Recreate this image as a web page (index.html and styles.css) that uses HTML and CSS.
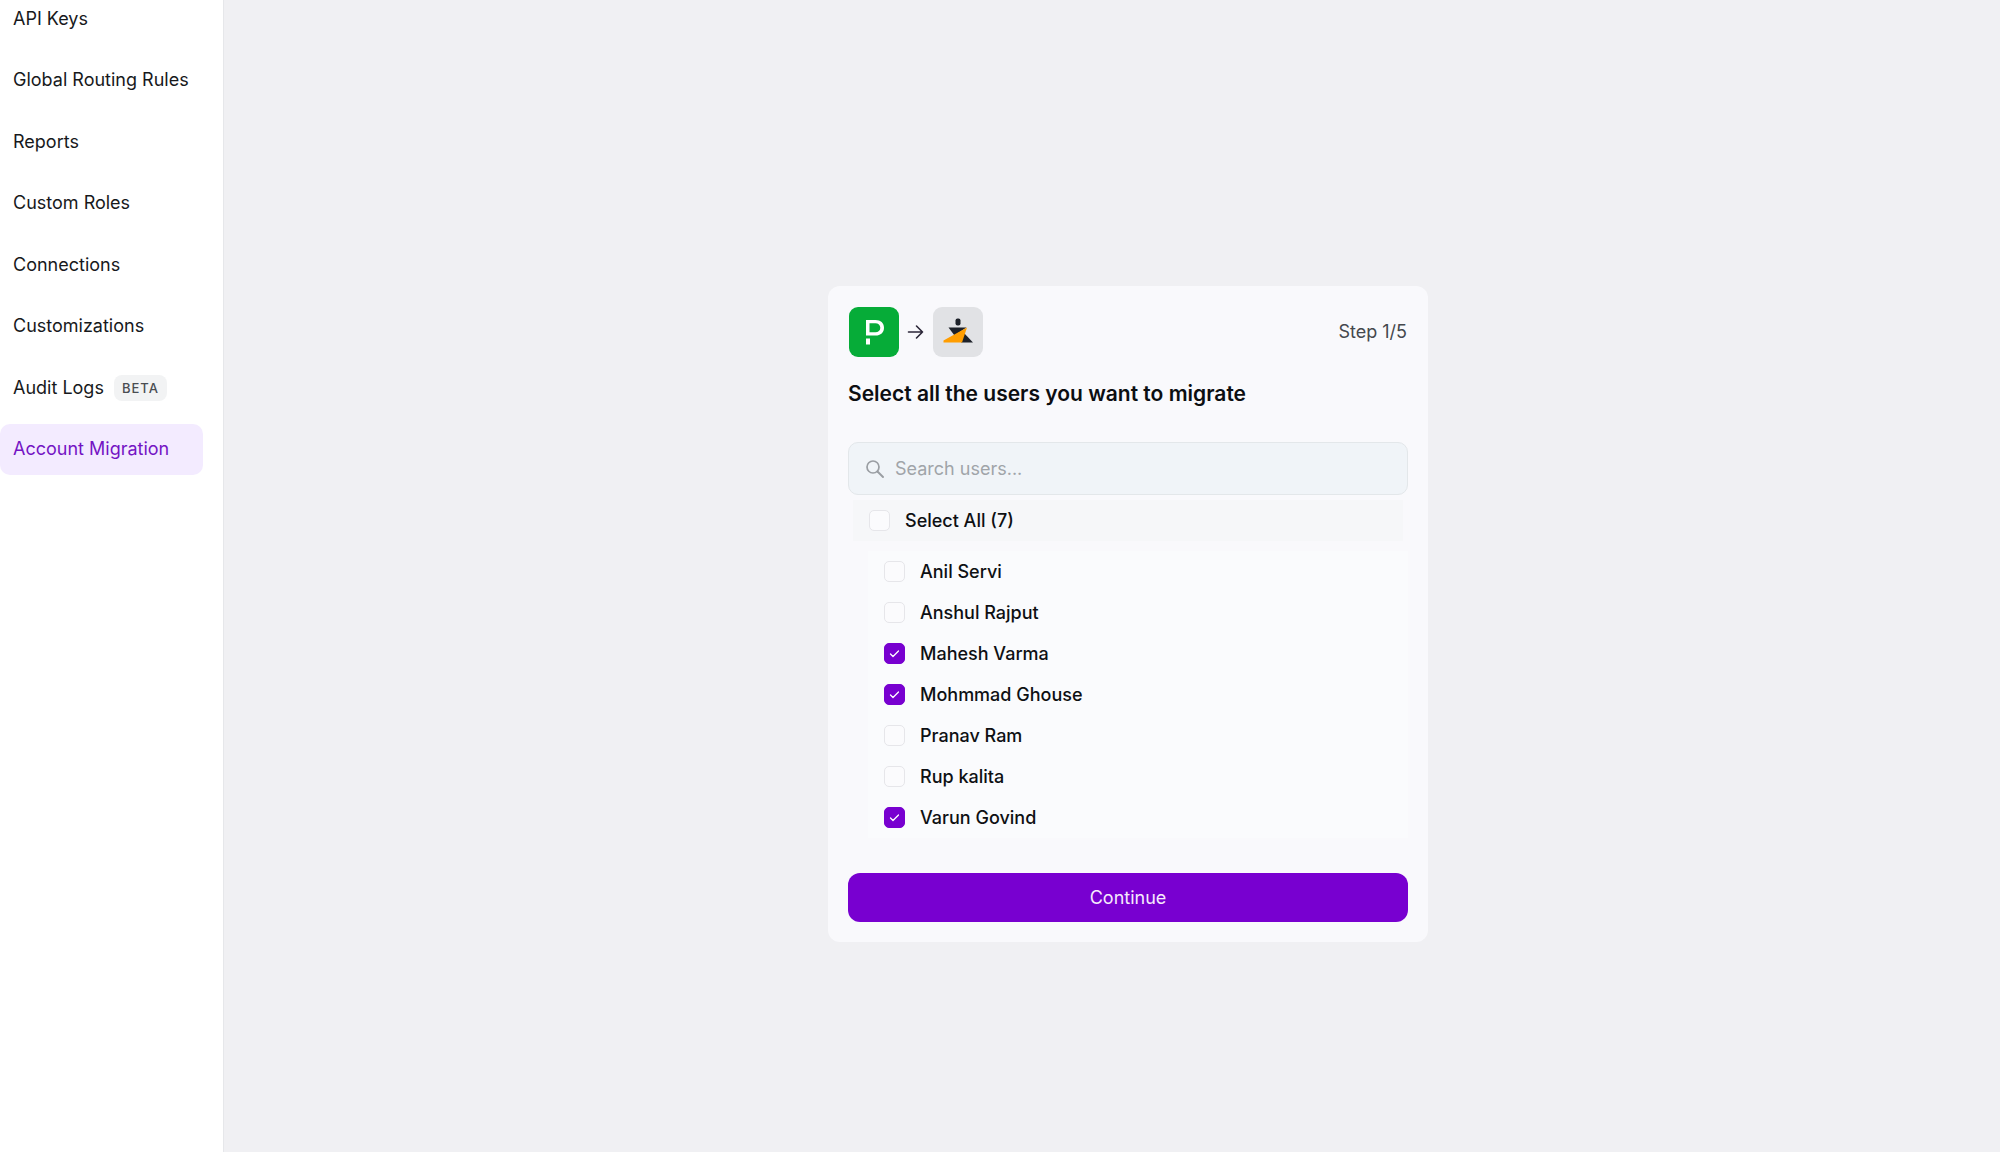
FILE: index.html
```html
<!DOCTYPE html>
<html lang="en">
<head>
<meta charset="utf-8">
<meta name="viewport" content="width=device-width, initial-scale=1">
<title>Account Migration</title>
<link rel="stylesheet" href="styles.css">
</head>
<body>
<div class="app">
  <aside class="sidebar">
    <nav aria-label="Settings">
      <ul class="nav-list">
        <li><a class="nav-link" href="#api-keys">API Keys</a></li>
        <li><a class="nav-link" href="#routing">Global Routing Rules</a></li>
        <li><a class="nav-link" href="#reports">Reports</a></li>
        <li><a class="nav-link" href="#roles">Custom Roles</a></li>
        <li><a class="nav-link" href="#connections">Connections</a></li>
        <li><a class="nav-link" href="#customizations">Customizations</a></li>
        <li><a class="nav-link" href="#audit">Audit Logs <span class="tag">BETA</span></a></li>
        <li><a class="nav-link active" href="#migration" aria-current="page">Account Migration</a></li>
      </ul>
    </nav>
  </aside>
  <main class="main">
    <form class="card">
      <header class="card-head">
        <div class="logos">
          <svg class="logo" viewBox="0 0 50 50" aria-hidden="true">
            <rect width="50" height="50" rx="9" fill="#06ac38"/>
            <path d="M17 31.500h4v6h-4z" fill="#fff"/>
            <path fill-rule="evenodd" d="M17 13h9.500c5.200 0 8.500 3 8.500 7.700s-3.300 7.800-8.500 7.800H17zM20.500 16.200v9.100h5.800c3 0 5-1.700 5-4.500s-2-4.600-5-4.600z" fill="#fff"/>
          </svg>
          <svg class="arrow" viewBox="0 0 18 16" aria-hidden="true">
            <path d="M1.500 8h14M9.500 2l6 6-6 6" fill="none" stroke="#2b2638" stroke-width="1.600" stroke-linecap="round" stroke-linejoin="round"/>
          </svg>
          <svg class="logo" viewBox="0 0 50 50" aria-hidden="true">
            <rect width="50" height="50" rx="9" fill="#e1e2e5"/>
            <rect x="22.500" y="11.500" width="5" height="7" rx="2" fill="#1d2129"/>
            <path d="M15.500 20.500h18l-12 8z" fill="#1d2129"/>
            <path d="M31 26l9 9.500H28z" fill="#1d2129"/>
            <path d="M34 20.500l-5 15H10.500v-2z" fill="#ff9d00"/>
          </svg>
        </div>
        <span class="step">Step 1/5</span>
      </header>
      <h1 class="title">Select all the users you want to migrate</h1>
      <div class="search">
        <svg class="search-icon" viewBox="0 0 18 18" aria-hidden="true">
          <circle cx="7" cy="7" r="6" fill="none" stroke="#9a9ea3" stroke-width="1.700"/>
          <path d="M11.500 11.500l5.500 5.500" stroke="#9a9ea3" stroke-width="1.900" stroke-linecap="round"/>
        </svg>
        <input class="search-input" type="text" placeholder="Search users..." aria-label="Search users">
      </div>
      <label class="row select-all"><input class="check" type="checkbox">Select All (7)</label>
      <div class="users">
        <label class="row"><input class="check" type="checkbox">Anil Servi</label>
        <label class="row"><input class="check" type="checkbox">Anshul Rajput</label>
        <label class="row"><input class="check" type="checkbox" checked>Mahesh Varma</label>
        <label class="row"><input class="check" type="checkbox" checked>Mohmmad Ghouse</label>
        <label class="row"><input class="check" type="checkbox">Pranav Ram</label>
        <label class="row"><input class="check" type="checkbox">Rup kalita</label>
        <label class="row"><input class="check" type="checkbox" checked>Varun Govind</label>
      </div>
      <button class="continue" type="button">Continue</button>
    </form>
  </main>
</div>
</body>
</html>
```
FILE: styles.css
```css
* { box-sizing: border-box; }

body {
  margin: 0;
  font-family: Inter, "Liberation Sans", sans-serif;
  font-size: 18px;
  line-height: 24px;
  color: #17191c;
  background: #f0f0f3;
}

.app { display: flex; min-height: 100vh; overflow: hidden; }

.sidebar {
  flex: 0 0 224px;
  padding-right: 20px;
  background: #fff;
  border-right: 1px solid #e6e7ea;
}

.nav-list {
  display: flex;
  flex-direction: column;
  justify-content: space-between;
  min-height: 482px;
  margin: -7px 0 0;
  padding: 0;
  list-style: none;
}

.nav-link {
  display: flex;
  align-items: center;
  gap: 10px;
  height: 51px;
  padding: 0 13px;
  border-radius: 10px;
  color: inherit;
  text-decoration: none;
  white-space: nowrap;
}

.nav-link.active { color: #7414c4; background: #f3ebff; }

.tag {
  padding: 0 8px;
  border-radius: 8px;
  background: #f2f3f4;
  color: #4a4d52;
  font-size: 13px;
  font-weight: 500;
  line-height: 26px;
  letter-spacing: 1px;
}

.main {
  flex: 1;
  display: flex;
  align-items: center;
  justify-content: center;
  padding: 76px 0 0 32px;
}

.card {
  width: 600px;
  max-width: 100%;
  padding: 20px;
  border-radius: 12px;
  background: #f9f9fc;
}

.card-head {
  display: flex;
  align-items: center;
  justify-content: space-between;
  padding: 1px 1px 0;
}

.logos { display: flex; align-items: center; gap: 8px; }
.logo { width: 50px; height: 50px; }
.arrow { width: 18px; height: 16px; }
.step { color: #45484d; }

.title {
  margin: 24px 0 35px;
  font-size: 21px;
  font-weight: 600;
  line-height: 26px;
  color: #0c0e11;
}

.search {
  display: flex;
  align-items: center;
  gap: 11px;
  height: 53px;
  padding: 0 17px;
  border: 1px solid #e3e7ea;
  border-radius: 10px;
  background: #f0f4f8;
}

.search-icon { flex: none; width: 18px; height: 18px; }

.search-input {
  flex: 1;
  min-width: 0;
  padding: 0;
  border: 0;
  outline: 0;
  background: transparent;
  font: inherit;
  color: inherit;
}

.search-input::placeholder { color: #a0a4a9; opacity: 1; }

.row {
  display: flex;
  align-items: center;
  gap: 15px;
  height: 41px;
  padding-left: 16px;
  font-weight: 500;
  color: #0e1013;
}

.select-all { margin: 5px 5px 0; background: #f6f7f9; }

.users {
  margin: 10px 0 35px 20px;
  background: #fafbfd;
}

.check {
  appearance: none;
  width: 21px;
  height: 21px;
  margin: 0;
  border: 1px solid #e6e6ea;
  border-radius: 5px;
  background: #fbfbfd center / 11px 11px no-repeat;
}

.check:checked {
  border-color: #7800d0;
  background-color: #7800d0;
  background-image: url("data:image/svg+xml,%3Csvg xmlns='http://www.w3.org/2000/svg' viewBox='0 0 11 11'%3E%3Cpath d='M1.500 6l2.500 2.500L9.500 3' fill='none' stroke='%23fff' stroke-width='1.300' stroke-linecap='round' stroke-linejoin='round'/%3E%3C/svg%3E");
}

.continue {
  display: block;
  width: 100%;
  height: 49px;
  border: 0;
  border-radius: 12px;
  background: #7800d0;
  color: #f6eafc;
  font: inherit;
}
```
